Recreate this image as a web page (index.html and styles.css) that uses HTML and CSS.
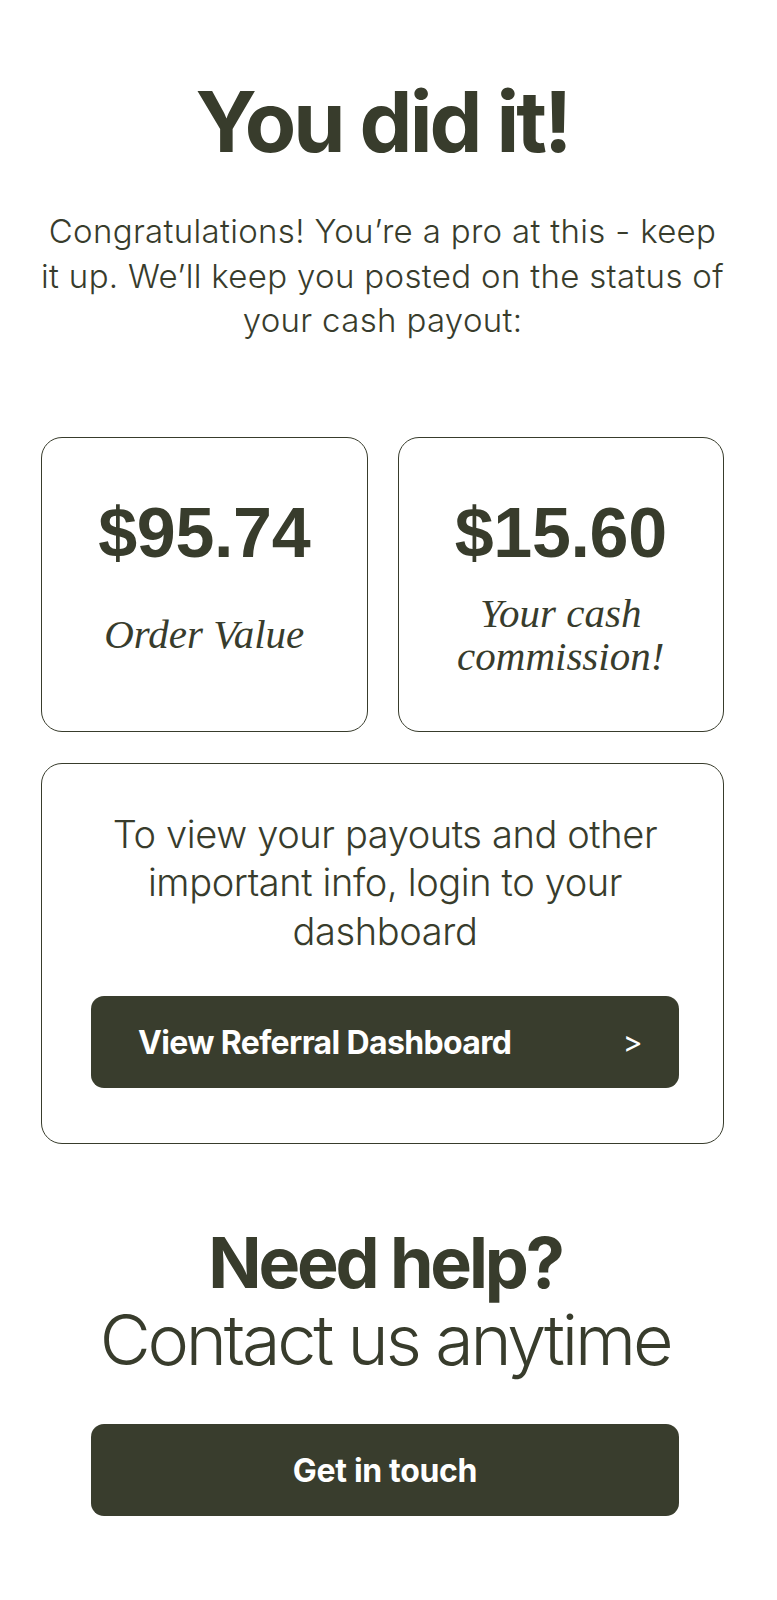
FILE: index.html
```html
<!DOCTYPE html>
<html lang="en">
<head>
<meta charset="utf-8">
<title>You did it!</title>
<link rel="stylesheet" href="styles.css">
</head>
<body>
<main class="page">
  <h1 class="title">You did it!</h1>
  <p class="intro">Congratulations! You’re a pro at this - keep it up. We’ll keep you posted on the status of your cash payout:</p>

  <section class="stats">
    <div class="stat-card">
      <div class="stat-value">$95.74</div>
      <div class="stat-label"><span>Order Value</span></div>
    </div>
    <div class="stat-card">
      <div class="stat-value">$15.60</div>
      <div class="stat-label"><span>Your cash<br>commission!</span></div>
    </div>
  </section>

  <section class="info-card">
    <p class="info-text">To view your payouts and other important info, login to your dashboard</p>
    <a class="btn btn-split" href="#"><span>View Referral Dashboard</span><span class="chev">&gt;</span></a>
  </section>

  <section class="help">
    <h2 class="help-title">Need help?</h2>
    <p class="help-sub">Contact us anytime</p>
    <a class="btn btn-center" href="#">Get in touch</a>
  </section>
</main>
</body>
</html>
```

FILE: styles.css
```css
* { box-sizing: border-box; }

html, body {
  margin: 0;
  padding: 0;
  background: #ffffff;
}

body {
  font-family: Inter, "Noto Sans", sans-serif;
  color: #383c2c;
}

.page {
  width: 777px;
  padding: 80px 53px 60px 41px;
  display: flex;
  flex-direction: column;
  align-items: stretch;
}

.title {
  margin: 0;
  font-size: 84px;
  line-height: 84px;
  font-weight: 700;
  letter-spacing: -0.035em;
  text-align: center;
}

.intro {
  margin: 45px -2px 0;
  font-size: 33px;
  line-height: 44.5px;
  font-weight: 300;
  text-align: center;
  letter-spacing: 0.01em;
}

.stats {
  margin-top: 94px;
  display: grid;
  grid-template-columns: 1fr 1fr;
  gap: 30px;
}

.stat-card {
  height: 295px;
  border: 1px solid #383c2c;
  border-radius: 21px;
  padding: 61px 10px 28px;
  display: flex;
  flex-direction: column;
  align-items: center;
}

.stat-value {
  font-family: "Liberation Sans", Arial, sans-serif;
  font-weight: 700;
  font-size: 70px;
  line-height: 68px;
  letter-spacing: -0.005em;
}

.stat-label {
  flex: 1;
  display: flex;
  align-items: center;
  justify-content: center;
  font-family: "Liberation Serif", "Times New Roman", serif;
  font-style: italic;
  font-size: 41px;
  line-height: 43px;
  text-align: center;
}

.info-card {
  margin-top: 31px;
  border: 1px solid #383c2c;
  border-radius: 21px;
  padding: 46px 44px 55px 49px;
  display: flex;
  flex-direction: column;
  align-items: stretch;
}

.info-text {
  margin: 0;
  font-size: 38px;
  line-height: 48.5px;
  font-weight: 300;
  text-align: center;
  letter-spacing: -0.01em;
}

.btn {
  display: flex;
  align-items: center;
  height: 92px;
  border-radius: 13px;
  background: #393d2d;
  color: #ffffff;
  text-decoration: none;
  font-weight: 700;
  font-size: 32px;
  letter-spacing: -0.01em;
}

.btn-split {
  margin-top: 41px;
  justify-content: space-between;
  padding: 0 37px 0 47px;
  letter-spacing: -0.02em;
}

.chev {
  font-weight: 400;
  font-size: 30px;
}

.help {
  margin-top: 80px;
  display: flex;
  flex-direction: column;
  align-items: stretch;
  padding: 0 0 0 5px;
}

.help-title {
  margin: 0;
  font-size: 70px;
  line-height: 77px;
  font-weight: 700;
  letter-spacing: -0.045em;
  text-align: center;
}

.help-sub {
  margin: 0;
  font-size: 70px;
  line-height: 77px;
  font-weight: 300;
  letter-spacing: -0.045em;
  text-align: center;
}

.btn-center {
  margin: 46px 45px 0 45px;
  justify-content: center;
}
```
